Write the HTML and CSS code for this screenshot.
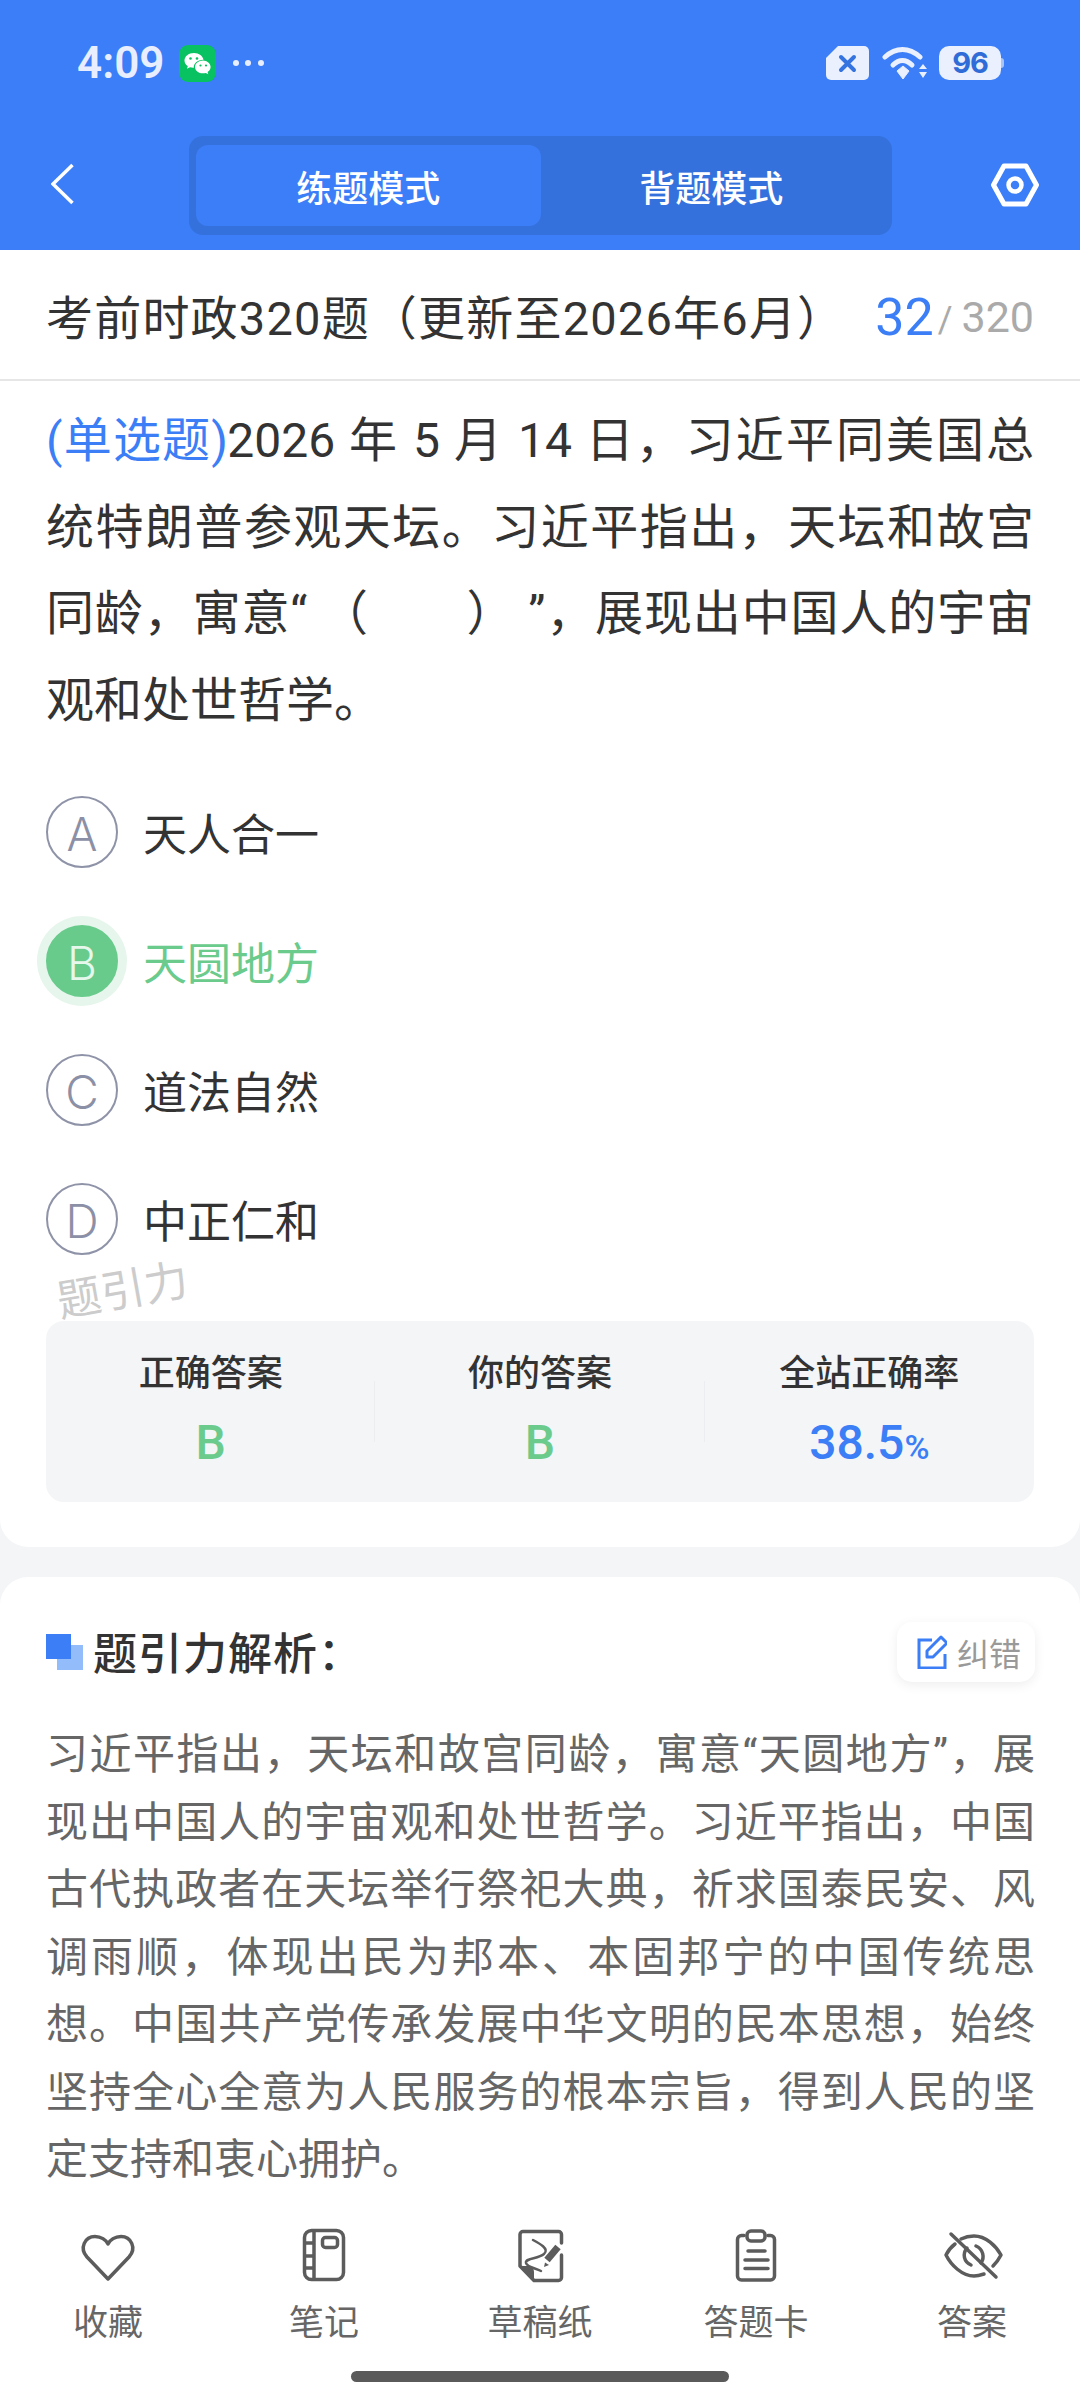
FILE: index.html
```html
<!DOCTYPE html>
<html lang="zh-CN">
<head>
<meta charset="utf-8">
<title>练题模式</title>
<link rel="stylesheet" href="styles.css">
</head>
<body>
<div class="page">
  <header class="header">
    <div class="status">
      <span class="time">4:09</span>
      <svg class="wechat" width="37" height="37" viewBox="0 0 37 37"><rect width="37" height="37" rx="9" fill="#08c160"/><path d="M15 8C9.500 8 5.500 11.500 5.500 15.500c0 2.300 1.300 4.300 3.300 5.700l-.8 2.600 3-1.500c1.200.3 2.500.5 3.800.4-.3-3.900 3.300-7.700 9.700-7.900C24 11 20 8 15 8z" fill="#fff"/><path d="M24 15.500c-4.600 0-8 3-8 6.400s3.400 6.400 8 6.400c1 0 1.900-.1 2.800-.4l2.500 1.300-.7-2.200c1.700-1.200 3-3 3-5.100 0-3.400-3.400-6.400-7.600-6.400z" fill="#fff"/><circle cx="11.500" cy="13.500" r="1.300" fill="#08c160"/><circle cx="18" cy="13.500" r="1.300" fill="#08c160"/><circle cx="21.500" cy="20.500" r="1.100" fill="#08c160"/><circle cx="27" cy="20.500" r="1.100" fill="#08c160"/></svg>
      <svg class="dots" width="32" height="6" viewBox="0 0 32 6"><circle cx="3" cy="3" r="3" fill="#e8eefd"/><circle cx="15" cy="3" r="3" fill="#e8eefd"/><circle cx="28" cy="3" r="3" fill="#e8eefd"/></svg>
      <svg class="sim" width="43" height="34" viewBox="0 0 43 34"><path d="M12 0H38a5 5 0 0 1 5 5V29a5 5 0 0 1-5 5H5a5 5 0 0 1-5-5V12z" fill="#eaf0fd"/><path d="M15 11L28 24M28 11L15 24" stroke="#3573e0" stroke-width="4" stroke-linecap="round"/></svg>
      <svg class="wifi" width="46" height="34" viewBox="0 0 46 34"><path d="M3 11C14 1 27 1 38 11" fill="none" stroke="#eaf0fd" stroke-width="5" stroke-linecap="round"/><path d="M11 19C17 13 24 13 30 19" fill="none" stroke="#eaf0fd" stroke-width="5" stroke-linecap="round"/><path d="M15 25L21 20L27 25L21 33z" fill="#eaf0fd" stroke="#eaf0fd" stroke-linejoin="round"/><path d="M37 23L41 18L45 23zM37 26H45L41 32z" fill="#eaf0fd"/></svg>
      <span class="battery"><span class="level">96</span></span>
    </div>
    <nav class="nav">
      <svg class="back" width="23" height="42" viewBox="0 0 23 42"><path d="M21.500 2L2 21L21.500 40" fill="none" stroke="#fff" stroke-width="3.500"/></svg>
      <div class="segment">
        <span class="tab active">练题模式</span>
        <span class="tab">背题模式</span>
      </div>
      <svg class="gear" width="50" height="44" viewBox="0 0 50 44"><path d="M3.500 22L14 3H36L46.500 22L36 41H14z" fill="none" stroke="#fff" stroke-width="5" stroke-linejoin="round"/><circle cx="25" cy="22" r="6.500" fill="none" stroke="#fff" stroke-width="4.500"/></svg>
    </nav>
  </header>

  <section class="card question">
    <div class="title-row">
      <h1 class="title">考前时政320题（更新至2026年6月）</h1>
      <div class="count"><span class="cur">32</span><span class="slash">/</span><span class="total">320</span></div>
    </div>
    <div class="q-body">
      <p class="stem"><span class="kind">(单选题)</span>2026 年 5 月 14 日，习近平同美国总统特朗普参观天坛。习近平指出，天坛和故宫同龄，寓意“&nbsp;（&#12288;&#12288;）&nbsp;”，展现出中国人的宇宙观和处世哲学。</p>
      <ul class="options">
        <li class="opt"><span class="mark">A</span><span class="opt-text">天人合一</span></li>
        <li class="opt picked"><span class="mark">B</span><span class="opt-text">天圆地方</span></li>
        <li class="opt"><span class="mark">C</span><span class="opt-text">道法自然</span></li>
        <li class="opt"><span class="mark">D</span><span class="opt-text">中正仁和</span></li>
      </ul>
      <div class="stats-wrap">
        <span class="watermark">题引力</span>
        <div class="stats">
          <div class="stat"><span class="label">正确答案</span><span class="value green">B</span></div>
          <div class="stat"><span class="label">你的答案</span><span class="value green">B</span></div>
          <div class="stat"><span class="label">全站正确率</span><span class="value blue">38.5<small>%</small></span></div>
        </div>
      </div>
    </div>
  </section>

  <section class="card analysis">
    <div class="an-head">
      <span class="squares"><i class="sq-back"></i><i class="sq-front"></i></span>
      <h2 class="an-title">题引力解析：</h2>
      <span class="report">
        <svg width="30" height="34" viewBox="0 0 30 34"><path d="M15 5H2V33H28V19" fill="none" stroke="#3b7ef6" stroke-width="3"/><path d="M10 22V16L24 2L30 8L16 22z" fill="none" stroke="#3b7ef6" stroke-width="3" stroke-linejoin="round"/></svg>
        <span>纠错</span>
      </span>
    </div>
    <p class="an-text">习近平指出，天坛和故宫同龄，寓意“天圆地方”，展现出中国人的宇宙观和处世哲学。习近平指出，中国古代执政者在天坛举行祭祀大典，祈求国泰民安、风调雨顺，体现出民为邦本、本固邦宁的中国传统思想。中国共产党传承发展中华文明的民本思想，始终坚持全心全意为人民服务的根本宗旨，得到人民的坚定支持和衷心拥护。</p>
  </section>

  <footer class="tabbar">
    <div class="tb-item">
      <svg width="64" height="56" viewBox="0 0 64 56"><path d="M32 51L11 29C3 20 9 8.500 19 8.500C25 8.500 30 12 32 16C34 12 39 8.500 45 8.500C55 8.500 61 20 53 29z" class="ic"/></svg>
      <span>收藏</span>
    </div>
    <div class="tb-item">
      <svg width="64" height="56" viewBox="0 0 64 56"><rect x="12.500" y="2.500" width="39" height="49" rx="7" class="ic"/><path d="M22 3V51M13 15H22M13 28H22M13 40H22" class="ic"/><rect x="30.500" y="9.500" width="15" height="10" rx="3" class="ic"/></svg>
      <span>笔记</span>
    </div>
    <div class="tb-item">
      <svg width="64" height="56" viewBox="0 0 64 56"><path d="M53.500 15V6.500A3 3 0 0 0 50.500 3.500H15A3 3 0 0 0 12 6.500V38L26 52.500H50.500A3 3 0 0 0 53.500 49.500V27" class="ic"/><path d="M12 38H20Q26 38 26 44V52z" fill="#5c5c5c"/><path d="M25 12C31 15 42 21 36 26C30 31 17 30 18 35C19 39 27 40 33 43" class="ic thin"/><path d="M50 19L39 32" stroke="#5c5c5c" stroke-width="7" fill="none"/><path d="M37 34.500L36 39L41 37z" fill="#5c5c5c"/></svg>
      <span>草稿纸</span>
    </div>
    <div class="tb-item">
      <svg width="64" height="56" viewBox="0 0 64 56"><path d="M20 7.500H17.500A4 4 0 0 0 13.500 11.500V48A4 4 0 0 0 17.500 52H46.500A4 4 0 0 0 50.500 48V11.500A4 4 0 0 0 46.500 7.500H44" class="ic"/><rect x="23" y="3" width="18" height="10" rx="4" class="ic"/><path d="M24 23H41M21 32H44M21 40.500H44" class="ic"/></svg>
      <span>答题卡</span>
    </div>
    <div class="tb-item">
      <svg width="64" height="56" viewBox="0 0 64 56"><path d="M11 6L56 49" class="ic"/><path d="M21 11C25 9 29 8 34 8C46 8 56 18 61 27C59 31 56 35 53 38M44 46C41 47 37 48 34 48C22 48 11 37 6 27C8 23 11 19 15 16" class="ic"/><path d="M27 20C22 26 24 34 31 37M41 35C45 29 43 21 36 18" class="ic"/></svg>
      <span>答案</span>
    </div>
  </footer>
  <div class="home-bar"></div>
</div>
</body>
</html>
```

FILE: styles.css
```css
* { box-sizing: border-box; margin: 0; padding: 0; }
html, body { width: 1080px; height: 2400px; overflow: hidden; }
body { background: #f4f5f7; font-family: Roboto, "Noto Sans CJK SC", sans-serif; color: #333; }
.page { position: relative; width: 1080px; height: 2400px; display: flex; flex-direction: column; }

.header { height: 250px; background: #3b7ef7; flex: none; }
.status { height: 136px; padding: 45px 79px 0 77px; display: flex; align-items: flex-start; }
.time { font-size: 44px; line-height: 37px; font-weight: 600; color: #e8eefd; width: 102px; }
.wechat { flex: none; }
.dots { margin: 15px 0 0 17px; flex: none; }
.sim { margin: 1px 0 0 auto; flex: none; }
.wifi { margin: 1px 0 0 13px; flex: none; }
.battery { position: relative; margin: 1px 0 0 11px; width: 62px; height: 34px; background: #eaf0fd; border-radius: 10px; display: flex; align-items: center; justify-content: center; }
.battery::after { content: ""; position: absolute; left: 62px; top: 12px; width: 3px; height: 10px; background: #a9c4f7; border-radius: 0 3px 3px 0; }
.level { font-family: Inter, Roboto, sans-serif; font-size: 29px; line-height: 34px; font-weight: 700; color: #2f6cd8; letter-spacing: -1px; }

.nav { display: flex; align-items: flex-start; padding-left: 51px; }
.back { margin-top: 27px; flex: none; }
.segment { margin-left: 115px; width: 703px; height: 99px; background: #3571dc; border-radius: 14px; padding: 9px 7px; display: flex; }
.tab { width: 345px; height: 81px; display: flex; align-items: center; justify-content: center; font-size: 36px; font-weight: 500; color: #fff; border-radius: 12px; }
.tab.active { background: #3b7ef7; }
.tab + .tab { padding-right: 3px; }
.gear { margin: 27px 0 0 98px; flex: none; }

.card { background: #fff; flex: none; }
.question { height: 1297px; border-radius: 0 0 28px 28px; }
.title-row { height: 131px; padding: 0 46px; border-bottom: 2px solid #e6e6e6; display: flex; align-items: center; justify-content: space-between; }
.title { font-size: 47px; font-weight: 400; color: #333; letter-spacing: 1.200px; white-space: nowrap; }
.count { display: flex; align-items: baseline; }
.cur { position: relative; top: 3px; font-size: 52px; color: #3b7ef6; }
.slash { font-size: 36px; color: #aaa; margin: 0 9px 0 4px; }
.total { font-size: 43px; color: #aaa; }

.q-body { padding: 17px 46px 0; }
.stem { font-size: 48px; line-height: 86.500px; text-align: justify; color: #333; }
.kind { color: #3b7ef6; letter-spacing: -.8px; }
.options { list-style: none; margin-top: 52px; display: flex; flex-direction: column; gap: 57px; }
.opt { display: flex; align-items: center; height: 72px; }
.mark { width: 72px; height: 72px; flex: none; border-radius: 50%; border: 2px solid #8f93a8; padding-top: 3px; display: flex; align-items: center; justify-content: center; font-family: Inter, sans-serif; font-size: 46px; font-weight: 300; color: #8c90a6; }
.opt-text { margin-left: 25px; font-size: 44px; color: #333; letter-spacing: 0; }
.picked .mark { background: #68cb8b; border-color: #68cb8b; color: #e6f7ec; box-shadow: 0 0 0 9px #e6f6ec; }
.picked .opt-text { color: #6acb8c; }

.stats-wrap { position: relative; margin-top: 66px; }
.watermark { position: absolute; left: 10px; top: -66px; font-size: 44px; color: #ccc; transform: rotate(-10deg); white-space: nowrap; }
.stats { height: 181px; background: #f4f5f7; border-radius: 18px; display: grid; grid-template-columns: repeat(3, 1fr); padding-top: 28px; }
.stat { display: flex; flex-direction: column; align-items: center; position: relative; }
.stat + .stat::before { content: ""; position: absolute; left: -1px; top: 32px; width: 1px; height: 61px; background: #ebedf0; }
.label { font-size: 36px; line-height: 50px; font-weight: 500; color: #333; }
.value { margin-top: 19px; font-size: 48px; line-height: 50px; font-weight: 500; }
.value small { font-size: 34px; font-weight: 500; }
.green { color: #6acb8c; }
.blue { color: #3b7ef6; }

.analysis { margin-top: 30px; height: 623px; border-radius: 28px 28px 0 0; padding: 45px 45px 0 46px; }
.an-head { display: flex; align-items: center; height: 60px; }
.squares { position: relative; width: 37px; height: 36px; flex: none; }
.squares i { position: absolute; display: block; }
.sq-front { left: 0; top: 0; width: 25px; height: 25px; background: #3b7ef6; }
.sq-back { left: 11px; top: 11px; width: 26px; height: 25px; background: #93bcfb; }
.an-title { margin: -3px 0 0 10px; font-size: 44px; font-weight: 500; color: #333; letter-spacing: 1px; }
.report { margin-left: auto; width: 138px; height: 60px; padding-left: 6px; border-radius: 15px; background: #fff; box-shadow: 0 3px 12px rgba(0,0,0,.07); display: flex; align-items: center; justify-content: center; gap: 10px; font-size: 32px; color: #999; }
.an-text { margin-top: 39px; font-size: 42px; line-height: 67.500px; color: #666; text-align: justify; }

.tabbar { flex: 1; background: #fff; display: grid; grid-template-columns: repeat(5, 216px); padding-top: 28px; align-content: start; }
.tb-item { display: flex; flex-direction: column; align-items: center; font-size: 35px; line-height: 50px; color: #666; }
.tb-item svg { margin-bottom: 15px; }
.ic { fill: none; stroke: #5c5c5c; stroke-width: 3.500; stroke-linecap: round; stroke-linejoin: round; }
.ic.thin { stroke-width: 2.500; }

.home-bar { position: absolute; left: 351px; top: 2371px; width: 378px; height: 11px; border-radius: 6px; background: #5a5a5a; }
```
